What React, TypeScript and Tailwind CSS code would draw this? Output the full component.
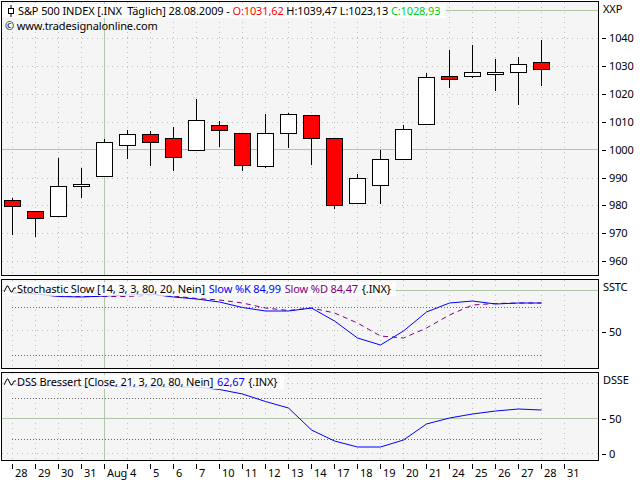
const XS = Array.from({ length: 25 }, (_, i) => 12 + i * 23);
const GREEN = '#b0c8a8';
const GRID = '#b8c4b4';

// body top/bottom and wick top/bottom in page pixels, one row per trading day
const CANDLES: [number, number, number, number, boolean][] = [
  [200, 206, 198, 235, true],
  [211, 218, 211, 237, true],
  [186, 216, 158, 216, false],
  [184, 186, 168, 198, false],
  [142, 176, 139, 176, false],
  [134, 145, 130, 159, false],
  [134, 142, 131, 166, true],
  [138, 157, 127, 171, true],
  [120, 150, 99, 150, false],
  [125, 130, 121, 147, true],
  [133, 165, 133, 171, true],
  [133, 166, 114, 168, false],
  [114, 133, 113, 148, false],
  [115, 138, 115, 165, true],
  [138, 205, 138, 209, true],
  [178, 203, 174, 203, false],
  [159, 185, 150, 204, false],
  [129, 159, 125, 159, false],
  [77, 124, 73, 124, false],
  [76, 79, 50, 88, true],
  [72, 76, 45, 78, false],
  [72, 74, 59, 91, false],
  [64, 72, 57, 105, false],
  [62, 69, 40, 86, true],
];

const STOCH_K = [293, 294, 296.5, 297, 296, 295, 294, 297, 299, 302, 307.5, 311, 311, 308, 321, 338, 345, 331, 312, 303, 301, 304, 303, 303];
const STOCH_D = [292, 294, 296, 296.5, 296.5, 296.5, 295, 296, 298.5, 300, 303, 308, 310.5, 308, 313, 323, 336, 338, 328, 315, 305, 303.5, 303, 303];
const DSS = [384, 385, 386, 386, 386, 387, 387, 387, 387, 389.5, 394, 401.5, 408, 430, 441, 447, 447, 440, 424, 418, 414, 411, 409, 410];

const line = (ys: number[]) => ys.map((y, i) => `${XS[i]}.5,${y}`).join(' ');

const UI_FONT = "font-['Noto_Sans',sans-serif] text-[11px] leading-[14px] tracking-[-0.12px]";

function Grid({ top, bottom, rows, solid, dark }: { top: number; bottom: number; rows: number[]; solid: number[]; dark?: number[] }) {
  return (
    <>
      {XS.map((x) =>
        x === 104 ? (
          <line key={x} x1={x + 0.5} x2={x + 0.5} y1={top} y2={bottom} stroke={GREEN} />
        ) : (
          <line key={x} x1={x + 0.5} x2={x + 0.5} y1={top} y2={bottom} stroke={GRID} strokeDasharray="1 4" />
        ),
      )}
      {rows.map((y) => (
        <line key={y} x1={2} x2={598} y1={y + 0.5} y2={y + 0.5} stroke={GRID} strokeDasharray="1 4" />
      ))}
      {dark?.map((y) => (
        <line key={y} x1={12} x2={542} y1={y + 0.5} y2={y + 0.5} stroke="#666" strokeDasharray="1 2" />
      ))}
      {solid.map((y) => (
        <line key={y} x1={2} x2={598} y1={y + 0.5} y2={y + 0.5} stroke={GREEN} />
      ))}
    </>
  );
}

function Rail({ label, ticks, top }: { label: string; ticks: [string, number][]; top: number }) {
  return (
    <div className="relative w-[41px] overflow-hidden">
      <div className="pl-[4px] pt-px whitespace-nowrap">{label}</div>
      {ticks.map(([text, y]) => (
        <div key={text} className="absolute left-[3px] flex items-center h-[14px]" style={{ top: y - top - 7 }}>
          <span className="w-[4px] h-px bg-black mr-[3px]" />
          {text}
        </div>
      ))}
    </div>
  );
}

function WaveIcon() {
  return (
    <svg width="12" height="8" viewBox="0 0 12 8" className="shrink-0">
      <path d="M0 7 L3 1 L4 1 L7 7 L8 7 L10 3 L12 3" fill="none" stroke="#000" strokeWidth="1" />
    </svg>
  );
}

const PRICE_TICKS: [string, number][] = [1040, 1030, 1020, 1010, 1000, 990, 980, 970, 960].map((p, i) => [String(p), [38, 66, 94, 122, 150, 178, 205, 233, 261][i]]);

const DATES = ['28', '29', '30', '31', 'Aug', '4', '5', '6', '7', '10', '11', '12', '13', '14', '17', '18', '19', '20', '21', '24', '25', '26', '27', '28', '31'];

export default function App() {
  return (
    <div className={`w-[640px] h-[480px] bg-white text-black overflow-hidden flex flex-col pt-px pl-px ${UI_FONT}`}>
      <div className="flex h-[275px]">
        <div className="relative w-[598px] border border-black bg-[#f5f5f5]">
          <svg width="596" height="273" viewBox="2 2 596 273" className="block" shapeRendering="crispEdges">
            <Grid top={2} bottom={275} rows={[38, 66, 94, 122, 178, 205, 233, 261]} solid={[10, 149]} />
            {CANDLES.map(([bt, bb, wt, wb, red], i) => (
              <g key={i}>
                <line x1={XS[i] + 0.5} x2={XS[i] + 0.5} y1={wt} y2={wb} stroke="#000" />
                <rect x={XS[i] - 7.5} y={bt + 0.5} width={16} height={bb - bt} fill={red ? '#ff0000' : '#ffffff'} stroke="#000" />
              </g>
            ))}
          </svg>
          <div className="absolute left-0 top-[2px] w-[444px] h-[14px] bg-white flex items-center whitespace-nowrap pl-[5px]">
            <svg width="8" height="12" viewBox="0 0 8 12" className="shrink-0 mr-[3px]">
              <path d="M4 0V12" stroke="#000" />
              <rect x="1.5" y="3.5" width="5" height="5" fill="#fff" stroke="#000" />
            </svg>
            <span>S&amp;P 500 INDEX [.INX&nbsp; Täglich] 28.08.2009 -&nbsp;</span>
            <span className="text-[#ff0000]">O:1031,62&nbsp;</span>
            <span>H:1039,47 L:1023,13&nbsp;</span>
            <span className="text-[#00d000]">C:1028,93</span>
          </div>
          <div className="absolute left-[3px] top-[17px] whitespace-nowrap">© www.tradesignalonline.com</div>
        </div>
        <Rail label="XXP" ticks={PRICE_TICKS} top={1} />
      </div>

      <div className="flex h-[90px] mt-[3px]">
        <div className="relative w-[598px] border border-black bg-[#f5f5f5]">
          <svg width="596" height="88" viewBox="2 280 596 88" className="block">
            <g shapeRendering="crispEdges">
              <Grid top={280} bottom={368} rows={[330]} solid={[290]} dark={[307, 355]} />
            </g>
            <polyline points={line(STOCH_D)} fill="none" stroke="#800080" strokeDasharray="5 4" />
            <polyline points={line(STOCH_K)} fill="none" stroke="#0000ff" />
          </svg>
          <div className="absolute left-[2px] top-[2px] w-[392px] h-[14px] bg-white/80 flex items-center gap-px whitespace-nowrap">
            <WaveIcon />
            <span>Stochastic Slow [14, 3, 3, 80, 20, Nein]&nbsp;</span>
            <span className="text-[#0000ff]">Slow %K 84,99&nbsp;</span>
            <span className="text-[#800080]">Slow %D 84,47&nbsp;</span>
            <span>{'{.INX}'}</span>
          </div>
        </div>
        <Rail label="SSTC" ticks={[['50', 332]]} top={279} />
      </div>

      <div className="flex h-[89px] mt-[3px]">
        <div className="relative w-[598px] border border-black bg-[#f5f5f5]">
          <svg width="596" height="87" viewBox="2 373 596 87" className="block">
            <g shapeRendering="crispEdges">
              <Grid top={373} bottom={460} rows={[383, 453]} solid={[418]} dark={[398, 439]} />
            </g>
            <polyline points={line(DSS)} fill="none" stroke="#0000ff" />
          </svg>
          <div className="absolute left-[2px] top-[2px] w-[280px] h-[14px] bg-white/80 flex items-center gap-px whitespace-nowrap">
            <WaveIcon />
            <span>DSS Bressert [Close, 21, 3, 20, 80, Nein]&nbsp;</span>
            <span className="text-[#0000ff]">62,67&nbsp;</span>
            <span>{'{.INX}'}</span>
          </div>
        </div>
        <Rail label="DSSE" ticks={[['50', 419], ['0', 454]]} top={372} />
      </div>

      <div className="flex pl-[11px] pt-[3px]">
        {DATES.map((d, i) => (
          <div key={i} className="w-[23px] flex shrink-0">
            <span className="w-px h-[5px] bg-black shrink-0" />
            <span className="ml-[2px] mt-[2px]">{d}</span>
          </div>
        ))}
      </div>
    </div>
  );
}
